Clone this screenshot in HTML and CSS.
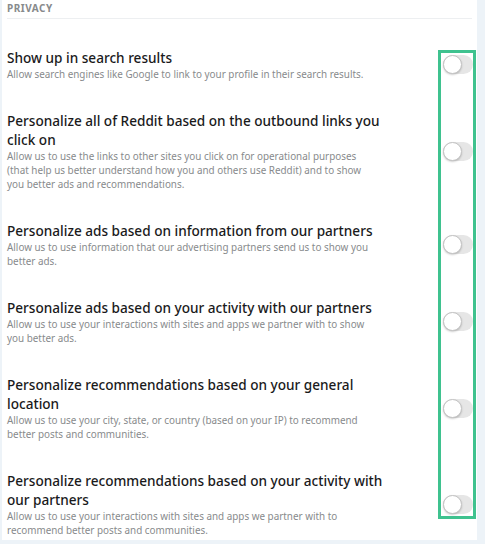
FILE: index.html
```html
<!DOCTYPE html>
<html lang="en">
<head>
<meta charset="utf-8">
<title>Privacy settings</title>
<link rel="stylesheet" href="styles.css">
</head>
<body>
<div class="card">
  <div class="section-title">PRIVACY</div>
  <div class="rows">
    <div class="row">
      <div class="text">
        <div class="title">Show up in search results</div>
        <div class="desc">Allow search engines like Google to link to your profile in their search results.</div>
      </div>
      <div class="toggle"><span class="knob"></span></div>
    </div>
    <div class="row">
      <div class="text">
        <div class="title">Personalize all of Reddit based on the outbound links you click on</div>
        <div class="desc">Allow us to use the links to other sites you click on for operational purposes (that help us better understand how you and others use Reddit) and to show you better ads and recommendations.</div>
      </div>
      <div class="toggle"><span class="knob"></span></div>
    </div>
    <div class="row">
      <div class="text">
        <div class="title">Personalize ads based on information from our partners</div>
        <div class="desc">Allow us to use information that our advertising partners send us to show you better ads.</div>
      </div>
      <div class="toggle"><span class="knob"></span></div>
    </div>
    <div class="row">
      <div class="text">
        <div class="title">Personalize ads based on your activity with our partners</div>
        <div class="desc">Allow us to use your interactions with sites and apps we partner with to show you better ads.</div>
      </div>
      <div class="toggle"><span class="knob"></span></div>
    </div>
    <div class="row">
      <div class="text">
        <div class="title">Personalize recommendations based on your general location</div>
        <div class="desc">Allow us to use your city, state, or country (based on your IP) to recommend better posts and communities.</div>
      </div>
      <div class="toggle"><span class="knob"></span></div>
    </div>
    <div class="row">
      <div class="text">
        <div class="title">Personalize recommendations based on your activity with our partners</div>
        <div class="desc">Allow us to use your interactions with sites and apps we partner with to recommend better posts and communities.</div>
      </div>
      <div class="toggle"><span class="knob"></span></div>
    </div>
  </div>
</div>
<div class="highlight"></div>
</body>
</html>
```
FILE: styles.css
```css
html, body {
  margin: 0;
  padding: 0;
}
body {
  background: #edf3f8;
  width: 485px;
  height: 544px;
  overflow: hidden;
  position: relative;
  font-family: "Noto Sans", "Liberation Sans", sans-serif;
}
.card {
  background: #ffffff;
  margin: 0 8px 0 2px;
  padding: 0 4px 0 5px;
  height: 540px;
  box-sizing: border-box;
}
.section-title {
  height: 19px;
  box-sizing: border-box;
  padding-top: 3px;
  font-size: 10px;
  line-height: 11px;
  font-weight: 700;
  letter-spacing: 0.5px;
  color: #878a8c;
  border-bottom: 1px solid #edeff1;
  margin-right: 1px;
}
.rows {
  margin-top: 14px;
}
.row {
  display: flex;
  align-items: center;
  justify-content: space-between;
  padding: 15px 0;
}
.text {
  width: 390px;
}
.title {
  font-size: 13.6px;
  line-height: 19px;
  font-weight: 500;
  color: #1a1a1b;
  max-width: 388px;
}
.desc {
  font-size: 9.9px;
  line-height: 14px;
  color: #878a8c;
  max-width: 370px;
}
.toggle {
  width: 30px;
  height: 19px;
  border-radius: 10px;
  background: #e6e6e6;
  position: relative;
  flex-shrink: 0;
}
.knob {
  position: absolute;
  left: 0;
  top: 0;
  width: 17px;
  height: 17px;
  border-radius: 50%;
  background: #ffffff;
  border: 1px solid #c4c4c4;
  box-shadow: 0 1px 2px rgba(0, 0, 0, 0.2);
}
.highlight {
  position: absolute;
  left: 438px;
  top: 50px;
  width: 38px;
  height: 469px;
  box-sizing: border-box;
  border: 3px solid #3fc28f;
}
```
